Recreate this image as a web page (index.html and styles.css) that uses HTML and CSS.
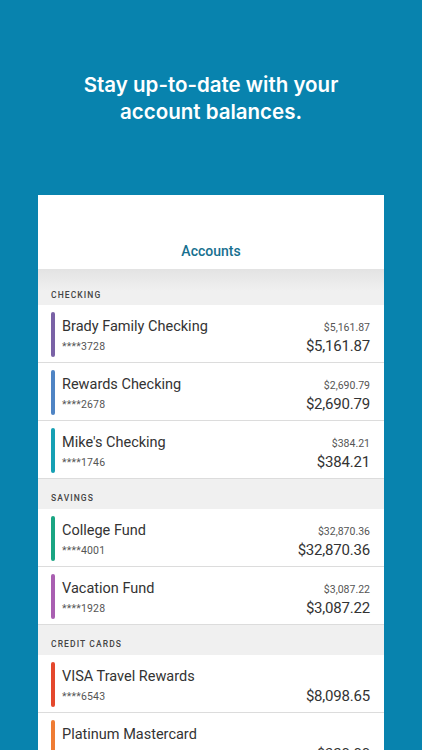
FILE: index.html
```html
<!DOCTYPE html>
<html lang="en">
<head>
  <meta charset="UTF-8">
  <meta name="viewport" content="width=device-width, initial-scale=1.0">
  <title>Accounts</title>
  <link rel="stylesheet" href="styles.css">
</head>
<body>
  <div class="hero">
    <h1>Stay up-to-date with your<br>account balances.</h1>
  </div>

  <div class="phone">
    <div class="nav-bar">
      <span class="nav-title">Accounts</span>
    </div>

    <div class="section-header first">CHECKING</div>
    <div class="account">
      <div class="bar purple"></div>
      <div class="info">
        <span class="name">Brady Family Checking</span>
        <span class="number">****3728</span>
      </div>
      <div class="amounts">
        <span class="available">$5,161.87</span>
        <span class="balance">$5,161.87</span>
      </div>
    </div>
    <div class="account">
      <div class="bar blue"></div>
      <div class="info">
        <span class="name">Rewards Checking</span>
        <span class="number">****2678</span>
      </div>
      <div class="amounts">
        <span class="available">$2,690.79</span>
        <span class="balance">$2,690.79</span>
      </div>
    </div>
    <div class="account">
      <div class="bar teal"></div>
      <div class="info">
        <span class="name">Mike's Checking</span>
        <span class="number">****1746</span>
      </div>
      <div class="amounts">
        <span class="available">$384.21</span>
        <span class="balance">$384.21</span>
      </div>
    </div>

    <div class="section-header">SAVINGS</div>
    <div class="account">
      <div class="bar green"></div>
      <div class="info">
        <span class="name">College Fund</span>
        <span class="number">****4001</span>
      </div>
      <div class="amounts">
        <span class="available">$32,870.36</span>
        <span class="balance">$32,870.36</span>
      </div>
    </div>
    <div class="account">
      <div class="bar magenta"></div>
      <div class="info">
        <span class="name">Vacation Fund</span>
        <span class="number">****1928</span>
      </div>
      <div class="amounts">
        <span class="available">$3,087.22</span>
        <span class="balance">$3,087.22</span>
      </div>
    </div>

    <div class="section-header">CREDIT CARDS</div>
    <div class="account">
      <div class="bar red"></div>
      <div class="info">
        <span class="name">VISA Travel Rewards</span>
        <span class="number">****6543</span>
      </div>
      <div class="amounts">
        <span class="available"></span>
        <span class="balance">$8,098.65</span>
      </div>
    </div>
    <div class="account">
      <div class="bar orange"></div>
      <div class="info">
        <span class="name">Platinum Mastercard</span>
        <span class="number">****8812</span>
      </div>
      <div class="amounts">
        <span class="available"></span>
        <span class="balance">$320.00</span>
      </div>
    </div>
  </div>
</body>
</html>
```

FILE: styles.css
```css
html, body {
  height: 100%;
  overflow: hidden;
}

body {
  margin: 0;
  padding: 0;
  background-color: #0883ae;
  font-family: 'Roboto', 'Inter', sans-serif;
  color: #333;
}

.hero {
  padding-top: 71px;
  height: 124px;
  text-align: center;
}

.hero h1 {
  margin: 0;
  font-family: 'Inter', sans-serif;
  font-size: 20.5px;
  line-height: 27px;
  font-weight: 600;
  color: #fff;
}

.phone {
  margin: 0 38px;
  background-color: #fff;
  min-height: 600px;
}

.nav-bar {
  height: 74px;
  display: flex;
  align-items: flex-end;
  justify-content: center;
  box-sizing: border-box;
  padding-bottom: 9px;
}

.nav-title {
  font-size: 14px;
  line-height: 17px;
  font-weight: 500;
  color: #17708f;
}

.section-header {
  height: 30px;
  box-sizing: border-box;
  padding: 0 13px 6px;
  display: flex;
  align-items: flex-end;
  background-color: #f0f0f0;
  font-size: 8.5px;
  font-weight: 500;
  letter-spacing: 1.1px;
  color: #444;
}

.section-header.first {
  height: 36px;
  padding-bottom: 5px;
  background: linear-gradient(#e3e3e3, #f0f0f0 60%);
}

.account {
  height: 58px;
  box-sizing: border-box;
  display: flex;
  padding: 0 14px 0 13px;
  border-bottom: 1px solid #dcdcdc;
}

.account:last-child {
  border-bottom: none;
}

.bar {
  width: 4px;
  margin-top: 7px;
  height: 45px;
  border-radius: 2px;
  flex-shrink: 0;
}

.bar.purple { background-color: #7a62a6; }
.bar.blue { background-color: #4f84c4; }
.bar.teal { background-color: #16a0b4; }
.bar.green { background-color: #1aa582; }
.bar.magenta { background-color: #a95fb1; }
.bar.red { background-color: #e4482d; }
.bar.orange { background-color: #ef7c34; }

.info {
  flex: 1;
  display: flex;
  flex-direction: column;
  padding-left: 7px;
  padding-top: 13px;
}

.info .name {
  font-size: 14.5px;
  line-height: 18px;
  color: #333;
}

.info .number {
  margin-top: 4px;
  font-size: 10.5px;
  line-height: 14px;
  letter-spacing: 0.2px;
  color: #555;
}

.amounts {
  display: flex;
  flex-direction: column;
  align-items: flex-end;
  padding-top: 16px;
}

.amounts .available {
  font-size: 10.5px;
  line-height: 14px;
  height: 14px;
  color: #555;
}

.amounts .balance {
  margin-top: 1px;
  font-size: 15px;
  line-height: 20px;
  letter-spacing: -0.2px;
  color: #333;
}
```
